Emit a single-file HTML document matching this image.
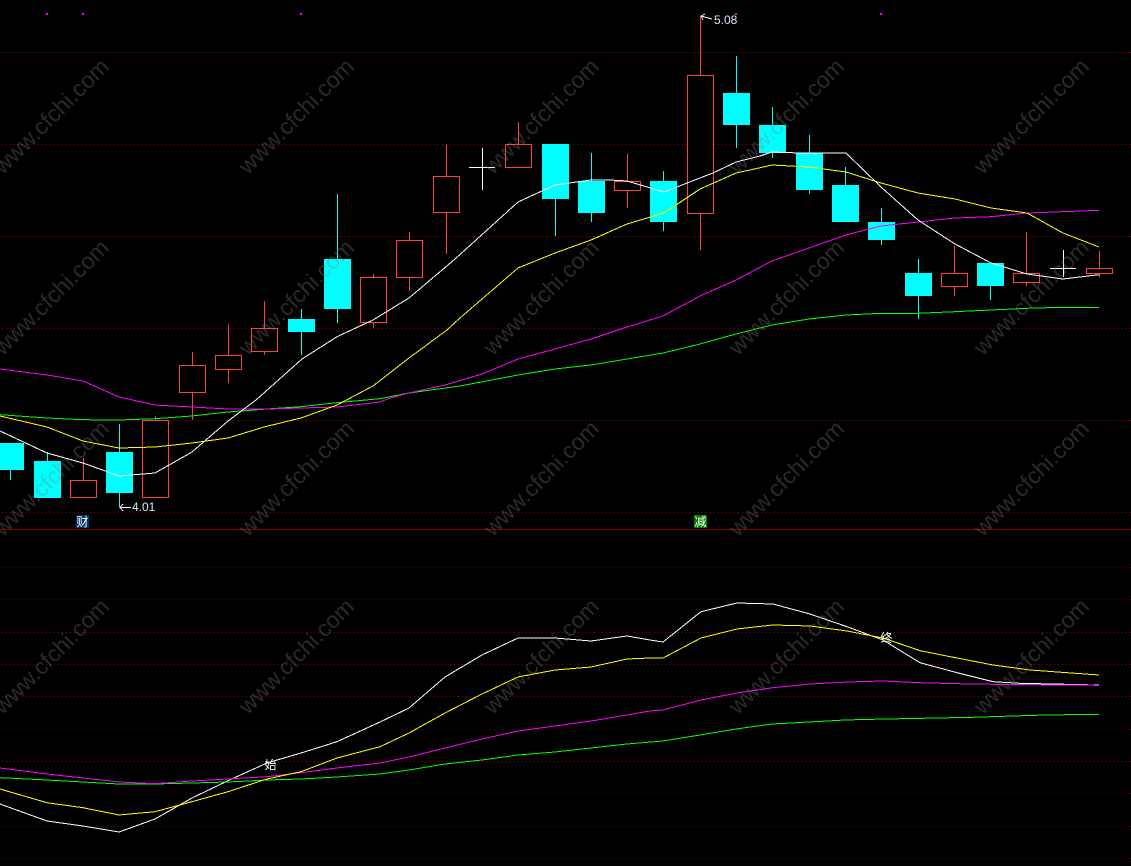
<!DOCTYPE html>
<html><head><meta charset="utf-8"><title>chart</title>
<style>
html,body{margin:0;padding:0;background:#000;width:1131px;height:866px;overflow:hidden}
svg{position:absolute;left:0;top:0}
.lab{position:absolute;width:13px;height:13px;line-height:13px;font:12px/13px "WenQuanYi Zen Hei","Noto Sans CJK SC",sans-serif;color:#fff;text-align:center}
.num{position:absolute;font:12px/12px "Liberation Sans",sans-serif;color:#dde6f5}
</style></head><body>
<svg width="1131" height="866" viewBox="0 0 1131 866" shape-rendering="crispEdges">
<g stroke="#a00000" stroke-width="1" stroke-dasharray="1 3" fill="none">
<path d="M2 52.5H1131M2 144.5H1131M2 236.5H1131M2 328.5H1131M2 420.5H1131M2 512.5H1131M2 632.5H1131M2 664.5H1131M2 696.5H1131M2 761.5H1131"/>
<path stroke="#700000" d="M2 567.5H1131M2 599.5H1131M2 729.5H1131M2 793.5H1131M2 826.5H1131M2 858.5H1131"/>
</g>
<path d="M0 529.5H1131" stroke="#800000" fill="none"/>
<g fill="#f0f">
<rect x="46" y="13" width="2" height="2"/><rect x="82" y="13" width="2" height="2"/><rect x="300" y="13" width="2" height="2"/><rect x="735" y="13" width="2" height="2"/><rect x="880" y="13" width="2" height="2"/>
</g>
<g stroke="#0ff" fill="none">
<path d="M10.5 470V480M47.5 452V461M119.5 424V507M301.5 309V355M337.5 194V323M555.5 199V236M591.5 153V222M663.5 171V231M736.5 56V148M772.5 107V158M809.5 135V194M845.5 167V185M881.5 208V245M918.5 259V319M990.5 286V300"/>
</g>
<g fill="#0ff">
<rect x="-3" y="443" width="27" height="27"/>
<rect x="34" y="461" width="27" height="37"/>
<rect x="106" y="452" width="27" height="41"/>
<rect x="288" y="319" width="27" height="13"/>
<rect x="324" y="259" width="27" height="50"/>
<rect x="542" y="144" width="27" height="55"/>
<rect x="578" y="181" width="27" height="32"/>
<rect x="650" y="181" width="27" height="41"/>
<rect x="723" y="93" width="27" height="32"/>
<rect x="759" y="125" width="27" height="28"/>
<rect x="796" y="153" width="27" height="37"/>
<rect x="832" y="185" width="27" height="37"/>
<rect x="868" y="222" width="27" height="18"/>
<rect x="905" y="273" width="27" height="23"/>
<rect x="977" y="263" width="27" height="23"/>
</g>
<g stroke="#ff4040" fill="none">
<path d="M83.5 458V480M155.5 416V420M192.5 352V420M228.5 324V383M264.5 301V355M373.5 274V328M409.5 232V291M446.5 145V254M518.5 122V144M627.5 154V208M700.5 16V250M954.5 246V296M1026.5 232V286M1099.5 251V277"/>
</g>
<g stroke="#ff4040" fill="#000">
<rect x="70.5" y="480.5" width="26" height="17"/>
<rect x="142.5" y="420.5" width="26" height="77"/>
<rect x="179.5" y="365.5" width="26" height="27"/>
<rect x="215.5" y="355.5" width="26" height="14"/>
<rect x="251.5" y="328.5" width="26" height="23"/>
<rect x="360.5" y="277.5" width="26" height="45"/>
<rect x="396.5" y="240.5" width="26" height="37"/>
<rect x="433.5" y="176.5" width="26" height="36"/>
<rect x="505.5" y="144.5" width="26" height="23"/>
<rect x="614.5" y="181.5" width="26" height="9"/>
<rect x="687.5" y="75.5" width="26" height="138"/>
<rect x="941.5" y="273.5" width="26" height="13"/>
<rect x="1013.5" y="273.5" width="26" height="9"/>
<rect x="1086.5" y="268.5" width="26" height="5"/>
</g>
<path d="M469 167.5H495M482.5 148V190M1050 268.5H1076M1063.5 250V277" stroke="#fff" fill="none"/>
<g fill="none" stroke-width="1">
<polyline stroke="#0f0" points="0,414.7 47,418 83,419.7 119,420 155,418.7 192,416 228,412 267,409 301,406.7 337,402.7 380,398.7 409,393 460,386 518,375 555,369 591,365 627,359 663,353 700,344 736,334 772,325 809,319 846,315 881,313.3 918,313.3 955,311.7 991,310 1027,308.3 1063,307.3 1099,307.3"/>
<polyline stroke="#f0f" points="0,369 47,375 83,381 119,397 155,405 192,407 228,409 267,409 301,408 337,407 380,402 390,398 409,393 445,385 482,374 518,359 555,349 591,339 627,327 663,316 700,296 736,280 772,261 809,248 846,235 881,226 918,222 955,218 991,216.7 1027,213 1063,211.7 1099,210.3"/>
<polyline stroke="#ff0" points="0,416 47,427 83,441 119,448 155,447 192,443 228,438 264,427 301,418 337,405 373,386 409,358 447,330 460,318 518,268 555,253 591,240 627,224 664,213 700,189 736,173 750,170 772,165 809,167 846,172 881,183 918,193 955,199 991,208 1027,213 1063,233 1099,247"/>
<polyline stroke="#fff" points="0,431 47,453 83,463 119,476 155,473 192,452 228,421 256,400 302,359 337,336.7 373,320 409,298 455,259 518,202 555,185 591,180 610,180 627,181 664,192 700,178 713,173 736,162 760,156 772,152 800,153 846,153 881,187 918,220 955,244 991,263 1027,274 1063,279 1099,274.7"/>
<polyline stroke="#fff" points="0,804 47,821 83,826 119,832 155,819 192,798 228,780.7 267,763 301,753 337,741.7 380,722 409,708 445,677 482,655 518,638 555,638 591,641 627,636 650,640 663,642 701,611.7 737,603 773,604 810,614 847,626.7 883,640 920,662.7 957,672.7 993,681.7 1020,683.3 1099,685"/>
<polyline stroke="#0f0" points="0,777.7 47,780 83,782 119,784 155,784 192,783 228,782 267,780 301,779 337,777 380,774 409,770 445,764 482,760 518,755 555,752 591,748 627,744 663,741 700,735 736,729 772,724 809,722 845,720 872,719.3 972,717.3 1045,715 1099,714.3"/>
<polyline stroke="#f0f" points="0,768 47,774 83,778 119,782 155,783.7 192,781 228,779 267,776.7 301,772.7 337,768 380,763 409,757 445,748 482,739 518,731 555,726 591,721 627,715 650,711 663,710 701,700 737,693 773,687.7 810,684 847,682 883,681 920,682.7 957,683.7 993,684.3 1099,685.3"/>
<polyline stroke="#ff0" points="0,789 47,802.7 83,807.7 119,815 155,811.7 192,801.7 228,791.7 267,779 301,771.7 337,758 380,746.7 409,733 445,713 482,694 518,677 555,670 591,667 627,659 650,658 663,658 701,638 737,629 773,625 810,626 847,631 883,638 920,650.7 957,658 993,665 1030,670 1099,675"/>
</g>
<g stroke="#fff" fill="none">
<path d="M120 507.5H131M120 507.5L123 504M120 507.5L123 511"/>
<path d="M701 16L712 19M701 16L705 14M701 16L703 20"/>
</g>
<g font-family="'Liberation Sans',sans-serif" font-size="23" fill="#808080" fill-opacity=".33" shape-rendering="auto" text-anchor="middle">
<text transform="translate(51 116) rotate(-45)" y="8">www.cfchi.com</text>
<text transform="translate(296 116) rotate(-45)" y="8">www.cfchi.com</text>
<text transform="translate(541 116) rotate(-45)" y="8">www.cfchi.com</text>
<text transform="translate(786 116) rotate(-45)" y="8">www.cfchi.com</text>
<text transform="translate(1031 116) rotate(-45)" y="8">www.cfchi.com</text>
<text transform="translate(51 297) rotate(-45)" y="8">www.cfchi.com</text>
<text transform="translate(296 297) rotate(-45)" y="8">www.cfchi.com</text>
<text transform="translate(541 297) rotate(-45)" y="8">www.cfchi.com</text>
<text transform="translate(786 297) rotate(-45)" y="8">www.cfchi.com</text>
<text transform="translate(1031 297) rotate(-45)" y="8">www.cfchi.com</text>
<text transform="translate(51 478) rotate(-45)" y="8">www.cfchi.com</text>
<text transform="translate(296 478) rotate(-45)" y="8">www.cfchi.com</text>
<text transform="translate(541 478) rotate(-45)" y="8">www.cfchi.com</text>
<text transform="translate(786 478) rotate(-45)" y="8">www.cfchi.com</text>
<text transform="translate(1031 478) rotate(-45)" y="8">www.cfchi.com</text>
<text transform="translate(51 656) rotate(-45)" y="8">www.cfchi.com</text>
<text transform="translate(296 656) rotate(-45)" y="8">www.cfchi.com</text>
<text transform="translate(541 656) rotate(-45)" y="8">www.cfchi.com</text>
<text transform="translate(786 656) rotate(-45)" y="8">www.cfchi.com</text>
<text transform="translate(1031 656) rotate(-45)" y="8">www.cfchi.com</text>
</g>
</svg>
<div class="lab" style="left:76px;top:515px;background:#003366">财</div>
<div class="lab" style="left:694px;top:515px;background:#008000">减</div>
<div class="lab" style="left:264px;top:758px">始</div>
<div class="lab" style="left:880px;top:631px">终</div>
<div class="num" style="left:132px;top:501px">4.01</div>
<div class="num" style="left:714px;top:14px">5.08</div>
</body></html>
